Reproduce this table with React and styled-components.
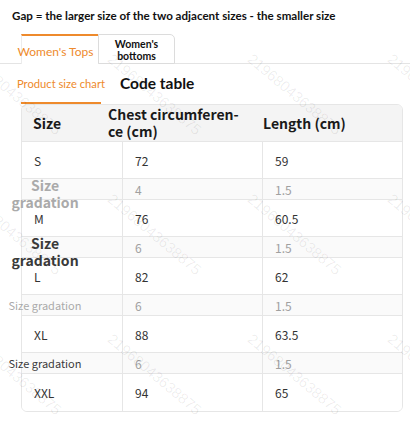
import React from "react";
import styled, { createGlobalStyle } from "styled-components";

const Global = createGlobalStyle`
  html, body { margin: 0; padding: 0; background: #fff; }
  body { font-family: Lato, "Noto Sans", sans-serif; }
`;

const ORANGE = "#ee8a2c";

const Page = styled.div`
  position: relative;
  width: 410px;
  height: 425px;
  overflow: hidden;
  background: #fff;
`;

const Title = styled.div`
  padding: 8px 0 0 12px;
  font-family: Lato, sans-serif;
  font-weight: 700;
  font-size: 11.6px;
  line-height: 16px;
  color: #111;
  white-space: nowrap;
`;

const TabBar = styled.div`
  display: flex;
  margin-top: 10px;
  padding-left: 21px;
  height: 29px;
  border-bottom: 1px solid #e4e4e4;
`;

const Tab = styled.div`
  box-sizing: border-box;
  width: 77px;
  height: 30px;
  margin-bottom: -1px;
  display: flex;
  align-items: center;
  justify-content: center;
  text-align: center;
  font-family: Lato, sans-serif;
  background: #fff;
  ${(p) =>
    p.$active
      ? `
    border-top: 2px solid ${ORANGE};
    border-left: 1px solid #ececec;
    color: ${ORANGE};
    font-size: 12px;
    white-space: nowrap;
    padding: 2px 9px 0 0;
  `
      : `
    border: 1px solid #dcdcdc;
    border-top-right-radius: 5px;
    color: #111;
    font-size: 10.5px;
    line-height: 12px;
    font-weight: 700;
    padding-top: 1px;
  `}
`;

const SubNav = styled.div`
  display: flex;
  height: 40px;
  padding-left: 21px;
`;

const SubTab = styled.div`
  box-sizing: border-box;
  height: 40px;
  display: flex;
  align-items: center;
  font-family: Lato, sans-serif;
  white-space: nowrap;
  ${(p) =>
    p.$active
      ? `
    width: 80px;
    justify-content: center;
    border-bottom: 2px solid ${ORANGE};
    color: ${ORANGE};
    font-size: 11.2px;
  `
      : `
    padding-left: 19px;
    padding-bottom: 2px;
    color: #111;
    font-size: 15.5px;
    font-weight: 700;
  `}
`;

const Table = styled.div`
  box-sizing: border-box;
  width: 382px;
  margin-left: 21px;
  border: 1px solid #e6e6e6;
  border-radius: 6px;
  font-family: "Noto Sans CJK SC", "Noto Sans", sans-serif;
`;

const HeaderRow = styled.div`
  display: grid;
  grid-template-columns: 75px 155px 1fr;
  align-items: center;
  height: 37px;
  box-sizing: border-box;
  padding-left: 11px;
  background: #f4f4f4;
  border-bottom: 1px solid #e6e6e6;
  border-radius: 5px 5px 0 0;
  font-weight: 700;
  font-size: 14px;
  line-height: 17px;
  color: #1a1a1a;
  white-space: nowrap;
`;

const HeaderCell = styled.div``;

const Row = styled.div`
  display: grid;
  grid-template-columns: 101px 140px 1fr;
  grid-template-rows: 100%;
  box-sizing: border-box;
  height: ${(p) => (p.$grad ? "21px" : "37px")};
  background: ${(p) => (p.$grad ? "#fafafa" : "#fff")};
  border-bottom: ${(p) => (p.$last ? "none" : "1px solid #e6e6e6")};
  border-radius: ${(p) => (p.$last ? "0 0 5px 5px" : "0")};
  font-size: 12px;
  color: ${(p) => (p.$grad ? "#a0a0a0" : "#333")};
`;

const Cell = styled.div`
  box-sizing: border-box;
  min-height: 0;
  display: flex;
  align-items: center;
  padding-left: ${(p) => (p.$label ? "0" : "12px")};
  border-right: ${(p) => (p.$lastCol ? "none" : "1px solid #e6e6e6")};
`;

const GradLabel = styled.div`
  position: relative;
  z-index: 1;
  flex: none;
  width: 80px;
  margin-left: -17px;
  text-align: center;
  ${(p) =>
    p.$big
      ? `
    font-size: 14px;
    font-weight: 700;
    line-height: 17px;
    margin-top: 10px;
  `
      : `
    font-size: 11px;
    white-space: nowrap;
  `}
  color: ${(p) => (p.$dark ? "#3a3a3a" : "#aaaaaa")};
`;

const WatermarkLayer = styled.div`
  position: absolute;
  inset: 0;
  pointer-events: none;
  z-index: 5;
`;

const Mark = styled.span`
  position: absolute;
  font-family: "Liberation Sans", sans-serif;
  font-size: 15px;
  color: rgba(0, 0, 0, 0.07);
  white-space: nowrap;
  transform: rotate(40deg);
  transform-origin: 0 50%;
`;

const rows = [
  { size: "S", chest: "72", len: "59" },
  { grad: true, label: { big: true, dark: false }, chest: "4", len: "1.5" },
  { size: "M", chest: "76", len: "60.5" },
  { grad: true, label: { big: true, dark: true }, chest: "6", len: "1.5" },
  { size: "L", chest: "82", len: "62" },
  { grad: true, label: { big: false, dark: false }, chest: "6", len: "1.5" },
  { size: "XL", chest: "88", len: "63.5" },
  { grad: true, label: { big: false, dark: true }, chest: "6", len: "1.5" },
  { size: "XXL", chest: "94", len: "65" },
];

const marks = [];
[-30, 110, 250, 390].forEach((x) =>
  [48, 188, 328].forEach((y) => marks.push({ x, y }))
);

export default function App() {
  return (
    <Page>
      <Global />
      <Title>Gap = the larger size of the two adjacent sizes - the smaller size</Title>
      <TabBar>
        <Tab $active>Women's Tops</Tab>
        <Tab>
          Women's
          <br />
          bottoms
        </Tab>
      </TabBar>
      <SubNav>
        <SubTab $active>Product size chart</SubTab>
        <SubTab>Code table</SubTab>
      </SubNav>
      <Table>
        <HeaderRow>
          <HeaderCell>Size</HeaderCell>
          <HeaderCell>
            Chest circumferen-
            <br />
            ce (cm)
          </HeaderCell>
          <HeaderCell>Length (cm)</HeaderCell>
        </HeaderRow>
        {rows.map((r, i) => (
          <Row key={i} $grad={r.grad} $last={i === rows.length - 1}>
            {r.grad ? (
              <Cell $label>
                <GradLabel $big={r.label.big} $dark={r.label.dark}>
                  Size gradation
                </GradLabel>
              </Cell>
            ) : (
              <Cell>{r.size}</Cell>
            )}
            <Cell>{r.chest}</Cell>
            <Cell $lastCol>{r.len}</Cell>
          </Row>
        ))}
      </Table>
      <WatermarkLayer>
        {marks.map((m, i) => (
          <Mark key={i} style={{ left: m.x, top: m.y }}>
            21968043638875
          </Mark>
        ))}
      </WatermarkLayer>
    </Page>
  );
}
